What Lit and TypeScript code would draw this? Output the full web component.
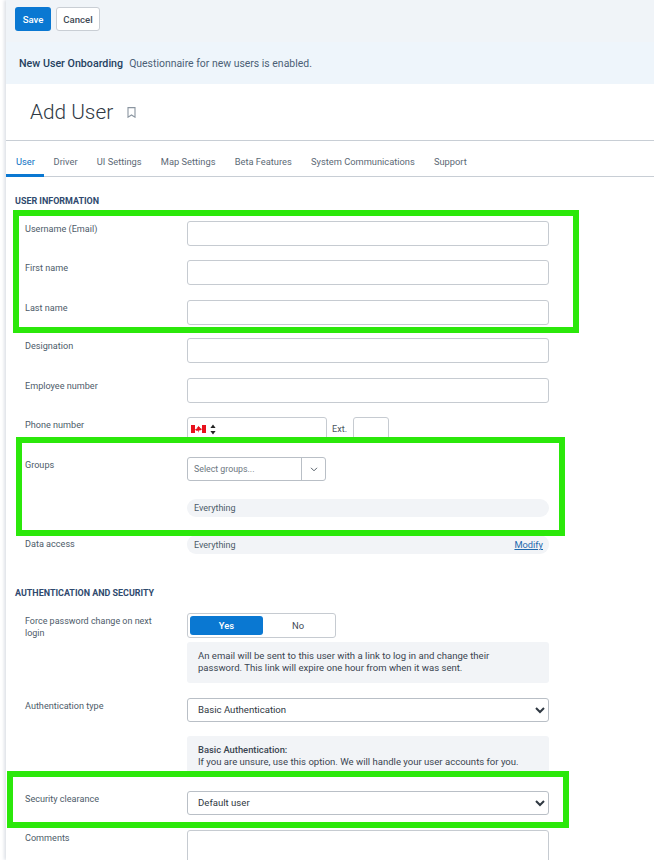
import { LitElement, html, css } from "lit";
import { customElement } from "lit/decorators.js";

@customElement("app-root")
export class AppRoot extends LitElement {
  static styles = css`
    :host {
      display: block;
      position: relative;
      width: 654px;
      height: 860px;
      overflow: hidden;
      background: #fff;
      font-family: Roboto, "Liberation Sans", sans-serif;
      font-size: 9.1px;
      color: #4d5b69;
    }
    * { box-sizing: border-box; }
    .page {
      margin-left: 6px;
      box-shadow: -2px 0 3px #dfe3e8;
      height: 860px;
    }
    .top {
      height: 42px;
      background: #f0f4f8;
      padding: 7px 0 0 9px;
      display: flex;
      gap: 5px;
      align-items: flex-start;
    }
    .btn {
      height: 24px;
      border-radius: 3px;
      font: 500 9.6px Roboto, sans-serif;
      padding: 0;
    }
    .save { width: 36px; background: #0a78d2; color: #fff; border: 0; }
    .cancel { width: 44px; background: #fff; color: #3f4a55; border: 1px solid #c9ced4; }
    .banner {
      height: 42px;
      background: #eef5fb;
      padding-left: 13px;
      display: flex;
      align-items: center;
      font-size: 10.45px;
      color: #4b5f76;
      gap: 6px;
    }
    .banner b { font-weight: 500; font-size: 10.7px; color: #25415f; }
    .head {
      height: 57px;
      border-bottom: 1px solid #c8ced5;
      padding-left: 24px;
      display: flex;
      align-items: center;
      gap: 14px;
    }
    h1 {
      margin: 0;
      font-size: 20.8px;
      font-weight: 300;
      color: #2f3944;
      line-height: 56px;
    }
    .tabs {
      height: 36px;
      border-bottom: 1px solid #c8ced5;
      display: flex;
      font-size: 9.3px;
      color: #5c6975;
    }
    .tab {
      padding: 0 9.6px;
      height: 36px;
      line-height: 41px;
    }
    .tab.on {
      color: #0a6fc2;
      box-shadow: inset 0 -3px 0 #0a78d2;
      width: 38px;
      padding: 0 0 0 10px;
    }
    .form { padding: 0 0 0 9px; }
    h2 {
      margin: 0;
      font-size: 8.95px;
      font-weight: 700;
      color: #2f4a6e;
      text-transform: uppercase;
      line-height: 12px;
    }
    .s1 { padding-top: 18px; }
    .s2 { margin-top: 33px; }
    .row {
      display: grid;
      grid-template-columns: 162px 362px;
      margin-left: 10px;
    }
    .lbl { line-height: 13px; padding-top: 2px; }
    .lbl.two { line-height: 12px; padding: 2px 20px 0 0; font-size: 8.97px; }
    .lbl.low { padding-top: 3px; }
    input {
      display: block;
      width: 100%;
      height: 25px;
      border: 1px solid #c6cbd1;
      border-radius: 3px;
      background: #fff;
      padding: 0;
    }
    .phone { display: flex; align-items: flex-start; gap: 5px; }
    .tel {
      width: 140px;
      height: 25px;
      border: 1px solid #c6cbd1;
      border-radius: 3px;
      padding: 7px 0 0 3px;
      display: flex;
      gap: 4px;
      align-items: flex-start;
    }
    .updown { margin-top: -1px; }
    .ext { line-height: 25px; color: #4a5560; margin-right: 1px; }
    .extin { width: 36px; }
    .combo {
      width: 139px;
      height: 24px;
      border: 1px solid #b9bfc6;
      border-radius: 3px;
      display: flex;
      color: #6d7781;
      font-size: 8.8px;
    }
    .combo span { flex: 1; padding-left: 6px; line-height: 22px; border-right: 1px solid #b9bfc6; }
    .combo i { width: 23px; display: flex; align-items: center; justify-content: center; }
    .pill {
      height: 18px;
      border-radius: 9px;
      background: #f2f4f7;
      padding: 0 6px 0 7px;
      line-height: 18px;
      display: flex;
      justify-content: space-between;
      font-size: 9px;
    }
    .pill.tall { height: 19px; line-height: 20px; }
    .pill a { color: #1e68ad; text-decoration: underline; font-size: 9.3px; }
    .toggle {
      width: 149px;
      height: 25px;
      border: 1px solid #c6cbd1;
      border-radius: 3px;
      padding: 2px;
      display: flex;
      font-size: 9.4px;
    }
    .toggle div { text-align: center; line-height: 19px; }
    .toggle .y { width: 73px; height: 19px; background: #0a78d2; color: #fff; border-radius: 3px; font-weight: 500; }
    .toggle .n { flex: 1; color: #3f4a55; }
    .note {
      background: #f2f4f7;
      border-radius: 3px;
      color: #3a4450;
      line-height: 12px;
      font-size: 9.55px;
    }
    .n1 { margin-top: 4px; height: 41px; padding: 8px 50px 0 11px; }
    .n2 { height: 40px; padding: 8px 9px 0 11px; margin-top: 14px; }
    .n2 b { font-weight: 500; font-size: 9.4px; }
    select {
      display: block;
      width: 100%;
      height: 24px;
      border: 1px solid #b9bfc6;
      border-radius: 3px;
      background: #fff;
      font: 9.6px Roboto, sans-serif;
      color: #2f3842;
      padding: 0 0 2px 6px;
    }
    .ta { height: 60px; }
    .mark {
      position: absolute;
      border: 6px solid #2be80a;
      pointer-events: none;
    }
    .m1 { left: 13px; top: 210px; width: 566px; height: 123px; }
    .m2 { left: 16px; top: 437px; width: 549px; height: 99px; }
    .m3 { left: 7px; top: 771px; width: 562px; height: 57px; }
    .cover { position: absolute; background: #fff; }
    .c2 { left: 22px; top: 443px; width: 537px; height: 6px; }
    .c3 { left: 13px; top: 777px; width: 550px; height: 14px; }
  `;

  private rows = [
    ["Username (Email)", 14],
    ["First name", 14],
    ["Last name", 15],
    ["Designation", 13],
    ["Employee number", 15],
  ] as const;

  render() {
    return html`
      <div class="page">
        <div class="top">
          <button class="btn save">Save</button>
          <button class="btn cancel">Cancel</button>
        </div>
        <div class="banner"><b>New User Onboarding</b><span>Questionnaire for new users is enabled.</span></div>
        <div class="head">
          <h1>Add User</h1>
          <svg width="9" height="11" viewBox="0 0 9 11" fill="none" stroke="#8a95a0" stroke-width="1.1"><path d="M1 .6h7v9.6L4.5 8 1 10.200z"/></svg>
        </div>
        <div class="tabs">
          <div class="tab on">User</div>
          <div class="tab">Driver</div>
          <div class="tab">UI Settings</div>
          <div class="tab">Map Settings</div>
          <div class="tab">Beta Features</div>
          <div class="tab">System Communications</div>
          <div class="tab">Support</div>
        </div>
        <div class="form">
          <h2 class="s1">User Information</h2>
          ${this.rows.map(
            ([l, m]) => html`<div class="row" style="margin-top:${m}px"><div class="lbl">${l}</div><input /></div>`
          )}
          <div class="row" style="margin-top:14px">
            <div class="lbl">Phone number</div>
            <div class="phone">
              <div class="tel">
                <svg width="15" height="8" viewBox="0 0 15 8"><rect width="15" height="8" fill="#fff"/><rect width="4" height="8" fill="#e8101c"/><rect x="11" width="4" height="8" fill="#e8101c"/><path d="M7.500.8l.8 1.400.8-.4-.3 1.800 1.100-.5.3.7 1 .2-1.500 1.300-1.900.1V7.200h-.6V5.800l-1.900-.1L3.800 4.400l1-.2.3-.7 1.100.5-.3-1.800.8.400z" fill="#e8101c"/></svg>
                <svg class="updown" width="6" height="11" viewBox="0 0 6 11" fill="#222"><path d="M3 .5l2.600 3.600H.4zM3 10.500L.4 6.900h5.200z"/></svg>
              </div>
              <span class="ext">Ext.</span>
              <input class="extin" />
            </div>
          </div>
          <div class="row" style="margin-top:15px">
            <div class="lbl">Groups</div>
            <div>
              <div class="combo">
                <span>Select groups...</span>
                <i><svg width="8" height="5" viewBox="0 0 8 5" fill="none" stroke="#555f69" stroke-width="1"><path d="M1 .8l3 3 3-3"/></svg></i>
              </div>
              <div class="pill" style="margin-top:18px">Everything</div>
            </div>
          </div>
          <div class="row" style="margin-top:18px">
            <div class="lbl low">Data access</div>
            <div class="pill tall">Everything<a>Modify</a></div>
          </div>
          <h2 class="s2">Authentication and Security</h2>
          <div class="row" style="margin-top:14px">
            <div class="lbl two">Force password change on next login</div>
            <div>
              <div class="toggle"><div class="y">Yes</div><div class="n">No</div></div>
              <div class="note n1">An email will be sent to this user with a link to log in and change their password. This link will expire one hour from when it was sent.</div>
            </div>
          </div>
          <div class="row" style="margin-top:15px">
            <div class="lbl">Authentication type</div>
            <div>
              <select><option>Basic Authentication</option></select>
              <div class="note n2"><b>Basic Authentication:</b><br />If you are unsure, use this option. We will handle your user accounts for you.</div>
            </div>
          </div>
          <div class="row" style="margin-top:15px">
            <div class="lbl">Security clearance</div>
            <select><option>Default user</option></select>
          </div>
          <div class="row" style="margin-top:15px">
            <div class="lbl">Comments</div>
            <input class="ta" />
          </div>
        </div>
      </div>
      <div class="cover c2"></div>
      <div class="cover c3"></div>
      <div class="mark m1"></div>
      <div class="mark m2"></div>
      <div class="mark m3"></div>
    `;
  }
}
